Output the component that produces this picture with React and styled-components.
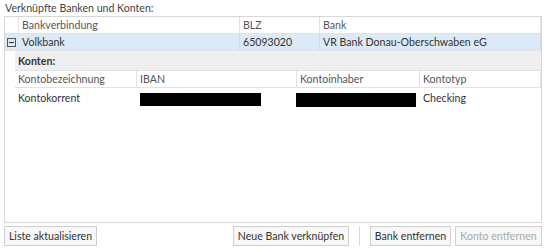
import React from "react";
import styled, { createGlobalStyle } from "styled-components";

const Global = createGlobalStyle`
  html, body { margin: 0; padding: 0; background: #fff; }
  body { font-family: "Lato", "Open Sans", sans-serif; font-size: 10.6px; color: #3a3a3a; }
  * { box-sizing: border-box; }
`;

const Page = styled.div`
  width: 548px;
  height: 250px;
  padding: 0 6px 0 4px;
  display: flex;
  flex-direction: column;
  overflow: hidden;
`;

const Title = styled.div`
  height: 16px;
  line-height: 16px;
  padding-left: 1px;
  color: #444;
`;

const Panel = styled.div`
  height: 207px;
  flex: none;
  border: 1px solid #d6d6d6;
  background: #fff;
  display: flex;
  flex-direction: column;
`;

const Row = styled.div`
  display: grid;
  grid-template-columns: ${(p) => p.$cols};
  height: ${(p) => p.$h}px;
  flex: none;
  background: ${(p) => p.$bg || "transparent"};
  border-top: ${(p) => (p.$top ? "1px solid #e2e2e2" : "none")};
  border-bottom: ${(p) => (p.$bottom ? "1px solid #e2e2e2" : "none")};
  margin-left: ${(p) => p.$indent || 0}px;
`;

const Cell = styled.div`
  display: flex;
  align-items: center;
  padding-left: ${(p) => (p.$pad === undefined ? 3 : p.$pad)}px;
  border-right: ${(p) => (p.$line ? `1px solid ${p.$line}` : "none")};
  white-space: nowrap;
  overflow: visible;
  color: ${(p) => p.$color || "#333"};
  font-weight: ${(p) => (p.$bold ? 700 : 400)};
`;

const Redact = styled.div`
  width: ${(p) => p.$w}px;
  height: ${(p) => p.$h}px;
  background: #000;
  margin-left: ${(p) => p.$ml}px;
  margin-top: ${(p) => p.$mt}px;
`;

const Detail = styled.div`
  display: flex;
  flex-direction: column;
`;

const ButtonBar = styled.div`
  display: flex;
  justify-content: space-between;
  margin-top: 3px;
  height: 20px;
  flex: none;
`;

const Group = styled.div`
  display: flex;
  align-items: stretch;
`;

const Button = styled.button`
  height: 20px;
  padding: 0;
  width: ${(p) => p.$w}px;
  margin-left: ${(p) => p.$ml || 0}px;
  border: 1px solid #d0d0d0;
  background: #f8f8f8;
  font-family: inherit;
  font-size: 10.6px;
  white-space: nowrap;
  color: ${(p) => (p.disabled ? "#a8a8a8" : "#333")};
  cursor: default;
  line-height: 18px;
`;

const Separator = styled.div`
  width: 1px;
  background: #d8d8d8;
  margin: 0 10px 0 10px;
`;

const Expander = () => (
  <svg width="9" height="9" viewBox="0 0 9 9" style={{ marginLeft: 1 }}>
    <rect x="0.5" y="0.5" width="8" height="8" fill="none" stroke="#555" />
    <line x1="2" y1="4.5" x2="7" y2="4.5" stroke="#333" />
  </svg>
);

const MAIN = "14px 221px 80px 1fr";
const SUB = "122px 160px 123px 1fr";

export default function App() {
  return (
    <>
      <Global />
      <Page>
        <Title>Verknüpfte Banken und Konten:</Title>
        <Panel>
          <Row $cols={MAIN} $h={17} $bottom>
            <Cell $line="#e2e2e2" />
            <Cell $line="#e2e2e2" $color="#555">Bankverbindung</Cell>
            <Cell $line="#e2e2e2" $color="#555">BLZ</Cell>
            <Cell $line="#e2e2e2" $color="#555">Bank</Cell>
          </Row>
          <Row $cols={MAIN} $h={17} $bg="#dce9f6" $bottom>
            <Cell $pad={1}><Expander /></Cell>
            <Cell $line="#cfdceb">Volkbank</Cell>
            <Cell $line="#cfdceb">65093020</Cell>
            <Cell $line="#cfdceb">VR Bank Donau-Oberschwaben eG</Cell>
          </Row>
          <Detail>
            <Row $cols="1fr" $h={19} $bg="#efefef" $indent={10}>
              <Cell $bold $color="#333">Konten:</Cell>
            </Row>
            <Row $cols={SUB} $h={18} $indent={10} $top $bottom>
              <Cell $line="#e2e2e2" $color="#555">Kontobezeichnung</Cell>
              <Cell $line="#e2e2e2" $color="#555">IBAN</Cell>
              <Cell $line="#e2e2e2" $color="#555">Kontoinhaber</Cell>
              <Cell $line="#e2e2e2" $color="#555">Kontotyp</Cell>
            </Row>
            <Row $cols={SUB} $h={17} $indent={10}>
              <Cell>Kontokorrent</Cell>
              <Cell $pad={0}><Redact $w={121} $h={13} $ml={3} $mt={4} /></Cell>
              <Cell $pad={0}><Redact $w={120} $h={14} $ml={-1} $mt={5} /></Cell>
              <Cell>Checking</Cell>
            </Row>
          </Detail>
        </Panel>
        <ButtonBar>
          <Button $w={93}>Liste aktualisieren</Button>
          <Group>
            <Button $w={116}>Neue Bank verknüpfen</Button>
            <Separator />
            <Button $w={81}>Bank entfernen</Button>
            <Button $w={87} $ml={4} disabled>Konto entfernen</Button>
          </Group>
        </ButtonBar>
      </Page>
    </>
  );
}
